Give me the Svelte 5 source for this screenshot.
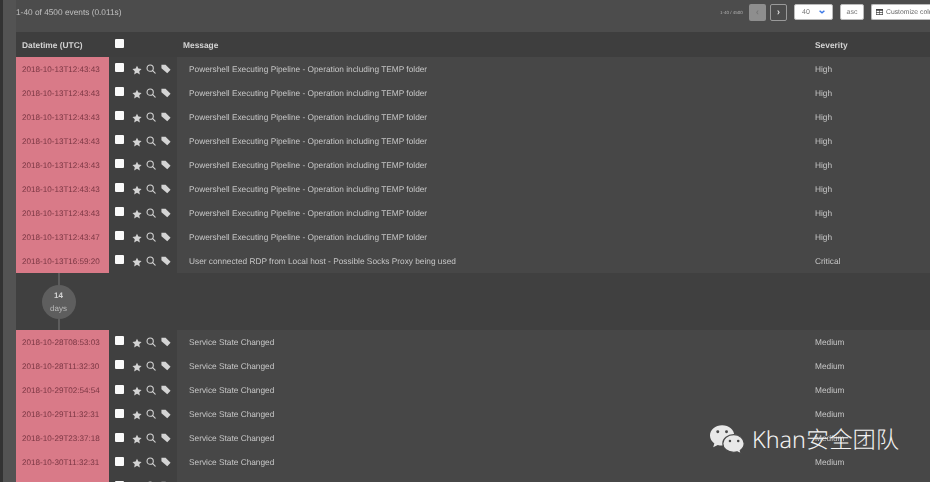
<script>
  const first = [
    '2018-10-13T12:43:43','2018-10-13T12:43:43','2018-10-13T12:43:43','2018-10-13T12:43:43','2018-10-13T12:43:43','2018-10-13T12:43:43','2018-10-13T12:43:43','2018-10-13T12:43:47'
  ].map((d) => ({ d, m: 'Powershell Executing Pipeline - Operation including TEMP folder', s: 'High' }));
  first.push({ d: '2018-10-13T16:59:20', m: 'User connected RDP from Local host - Possible Socks Proxy being used', s: 'Critical' });
  const second = ['2018-10-28T08:53:03','2018-10-28T11:32:30','2018-10-29T02:54:54','2018-10-29T11:32:31','2018-10-29T23:37:18','2018-10-30T11:32:31','']
    .map((d) => ({ d, m: d ? 'Service State Changed' : '', s: d ? 'Medium' : '' }));
</script>

{#snippet row(r)}
  <div class="row">
    <div class="date">{r.d}</div>
    <div class="acts">
      <span class="check"></span>
      <svg class="star" viewBox="0 0 24 24"><path d="M12 1.500l3.300 7 7.700 1-5.600 5.300 1.400 7.700L12 18.500l-6.800 4 1.400-7.700L1 9.500l7.700-1z"/></svg>
      <svg class="mag" viewBox="0 0 24 24"><circle cx="10" cy="10" r="7.500"/><path d="M15.500 15.500l6.500 6.500" stroke-linecap="round"/></svg>
      <svg class="tag" viewBox="0 0 24 24"><path d="M1 2h10l12 12-8 8L1 10z"/></svg>
    </div>
    <div class="msg">{r.m}</div>
    <div class="sev">{r.s}</div>
  </div>
{/snippet}

<div class="page">
  <div class="rail"></div>
  <div class="main">
    <div class="top">
      <span class="count">1-40 of 4500 events (0.011s)</span>
      <div class="controls">
        <span class="range">1-40 / 4500</span>
        <span class="btn off">‹</span>
        <span class="btn next">›</span>
        <span class="field size">40 <svg viewBox="0 0 10 6"><path d="M1 1l4 3.500L9 1" fill="none" stroke="#3b78e7" stroke-width="2.400"/></svg></span>
        <span class="field asc">asc</span>
        <span class="field cust">
          <svg viewBox="0 0 12 10"><path d="M0 0h12v10H0z" fill="#444"/><path d="M1 3h4.500v2.500H1zM6.500 3H11v2.500H6.500zM1 6.500h4.500V9H1zM6.500 6.500H11V9H6.500z" fill="#fff"/></svg>
          Customize columns
        </span>
      </div>
    </div>
    <div class="head">
      <div class="h-date">Datetime (UTC)</div>
      <div class="h-act"><span class="check"></span></div>
      <div class="h-msg">Message</div>
      <div class="h-sev">Severity</div>
    </div>
    {#each first as r}{@render row(r)}{/each}
    <div class="gap">
      <div class="line">
        <div class="bubble"><b>14</b><span>days</span></div>
      </div>
    </div>
    {#each second as r}{@render row(r)}{/each}
  </div>
  <div class="mark">
    <svg viewBox="0 0 38 30" width="37" height="30">
      <path d="M13.500 1C6.500 1 1 5.600 1 11.500c0 3.300 1.800 6.200 4.500 8.100L4.300 23.600l4.700-2.400c1.400.4 2.900.6 4.500.6 6.900 0 12.500-4.700 12.500-10.300S20.500 1 13.500 1z" fill="#e8e8e8"/>
      <path d="M25.500 10.500c-6.300 0-11.300 4.100-11.300 9.100s5 9 11.300 9c1.200 0 2.400-.2 3.500-.5l4.100 2.100-1-3.500c2.500-1.700 4-4.200 4-7.100 0-5-4.800-9.100-10.600-9.100z" fill="#e8e8e8" stroke="#474747" stroke-width="1.200"/>
      <circle cx="9" cy="7.500" r="1.500" fill="#474747"/><circle cx="18" cy="7.500" r="1.500" fill="#474747"/>
      <circle cx="21.500" cy="17" r="1.300" fill="#474747"/><circle cx="30" cy="17" r="1.300" fill="#474747"/>
    </svg>
    <span>Khan安全团队</span>
  </div>
</div>

<style>
  :global(body) { margin: 0; background: #474747; overflow: hidden; }
  .page { width: 930px; height: 482px; display: flex; overflow: hidden; position: relative; background: #4a4a4a; font-family: "Liberation Sans", Arial, sans-serif; color: #c6c6c6; text-rendering: geometricPrecision; }
  .rail { width: 3px; flex: none; background: #333; }
  .main { flex: none; width: 927px; padding-left: 13px; box-sizing: border-box; background: linear-gradient(#4c4c4c, #4c4c4c) 13px 0 / 100% 32px no-repeat, #535353; filter: blur(0.6px); }
  .top { height: 32px; display: flex; align-items: center; justify-content: space-between; font-size: 8.300px; padding-bottom: 8px; box-sizing: border-box; }
  .count { color: #c0c0c0; }
  .controls { display: flex; align-items: center; width: 210px; flex: none; }
  .range { font-size: 4.500px; color: #b4b4b4; width: 29px; flex: none; white-space: nowrap; }
  .btn { height: 17px; box-sizing: border-box; display: flex; align-items: center; justify-content: center; border-radius: 2px; font-size: 10px; font-weight: bold; flex: none; }
  .off { width: 17px; background: #8e8e8e; color: #777; margin-right: 4px; }
  .next { width: 17px; border: 1px solid #9a9a9a; color: #ddd; margin-right: 7px; }
  .field { height: 16px; box-sizing: border-box; background: #fff; border: 1px solid #bbb; border-radius: 2px; color: #777; font-size: 7px; display: flex; align-items: center; flex: none; }
  .size { width: 39px; padding: 0 7px 0 7px; justify-content: space-between; margin-right: 7px; }
  .size svg { width: 6px; height: 4px; }
  .asc { width: 24px; justify-content: center; margin-right: 7px; }
  .cust { width: 59px; padding-left: 4px; gap: 3px; white-space: nowrap; overflow: hidden; border-right: 0; border-radius: 2px 0 0 2px; color: #666; font-size: 6.800px; }
  .cust svg { width: 7px; height: 6px; flex: none; }
  .head { display: flex; height: 25px; padding-top: 1px; box-sizing: border-box; background: #3e3e3e; font-size: 8.400px; font-weight: bold; align-items: center; color: #d4d4d4; }
  .h-date { width: 93px; padding-left: 6px; box-sizing: border-box; flex: none; }
  .h-act { width: 68px; padding-left: 6px; box-sizing: border-box; flex: none; display: flex; }
  .h-msg { width: 638px; padding-left: 6px; box-sizing: border-box; flex: none; }
  .h-act .check { margin-top: -4px; }
  .row { display: flex; height: 24.05px; font-size: 8.300px; line-height: 23px; align-items: stretch; }
  .date { width: 93px; flex: none; box-sizing: border-box; padding-left: 6px; background: #d97a88; color: #7a3643; display: flex; align-items: center; font-size: 8.100px; }
  .acts { width: 68px; flex: none; box-sizing: border-box; padding-left: 6px; background: #404040; display: flex; align-items: center; }
  .check { display: block; width: 9px; height: 9px; background: #fafafa; border-radius: 1px; flex: none; }
  .acts .check { margin-top: -3px; }
  .acts svg { flex: none; }
  .star, .tag { fill: #d4d4d4; }
  .star { width: 10px; height: 10px; margin-left: 8px; margin-top: 1px; }
  .mag { width: 10px; height: 10px; margin-left: 4px; margin-top: -1px; fill: none; stroke: #d4d4d4; stroke-width: 2.600; }
  .tag { width: 10px; height: 10px; margin-left: 5px; margin-top: -1px; }
  .msg { width: 631px; flex: none; box-sizing: border-box; padding-left: 12px; background: #474747; display: flex; align-items: center; }
  .sev { flex: 1; box-sizing: border-box; padding-left: 7px; background: #474747; display: flex; align-items: center; }
  .gap { height: 57px; background: #404040; padding-left: 41.5px; box-sizing: border-box; }
  .line { width: 2px; height: 100%; background: #5c5c5c; display: flex; justify-content: center; align-items: center; box-sizing: border-box; }
  .bubble { flex: none; width: 34px; height: 34px; border-radius: 50%; background: #5e5e5e; display: flex; flex-direction: column; align-items: center; justify-content: center; font-size: 8px; line-height: 13px; color: #bbb; }
  .bubble b { color: #d4d4d4; }
  .mark { position: absolute; left: 709px; top: 424px; display: flex; align-items: center; gap: 6px; color: #f2f2f2; line-height: 30px; }
  .mark span { font-family: "Noto Sans", "Noto Sans CJK SC", sans-serif; font-size: 23.300px; font-weight: 300; }
</style>
